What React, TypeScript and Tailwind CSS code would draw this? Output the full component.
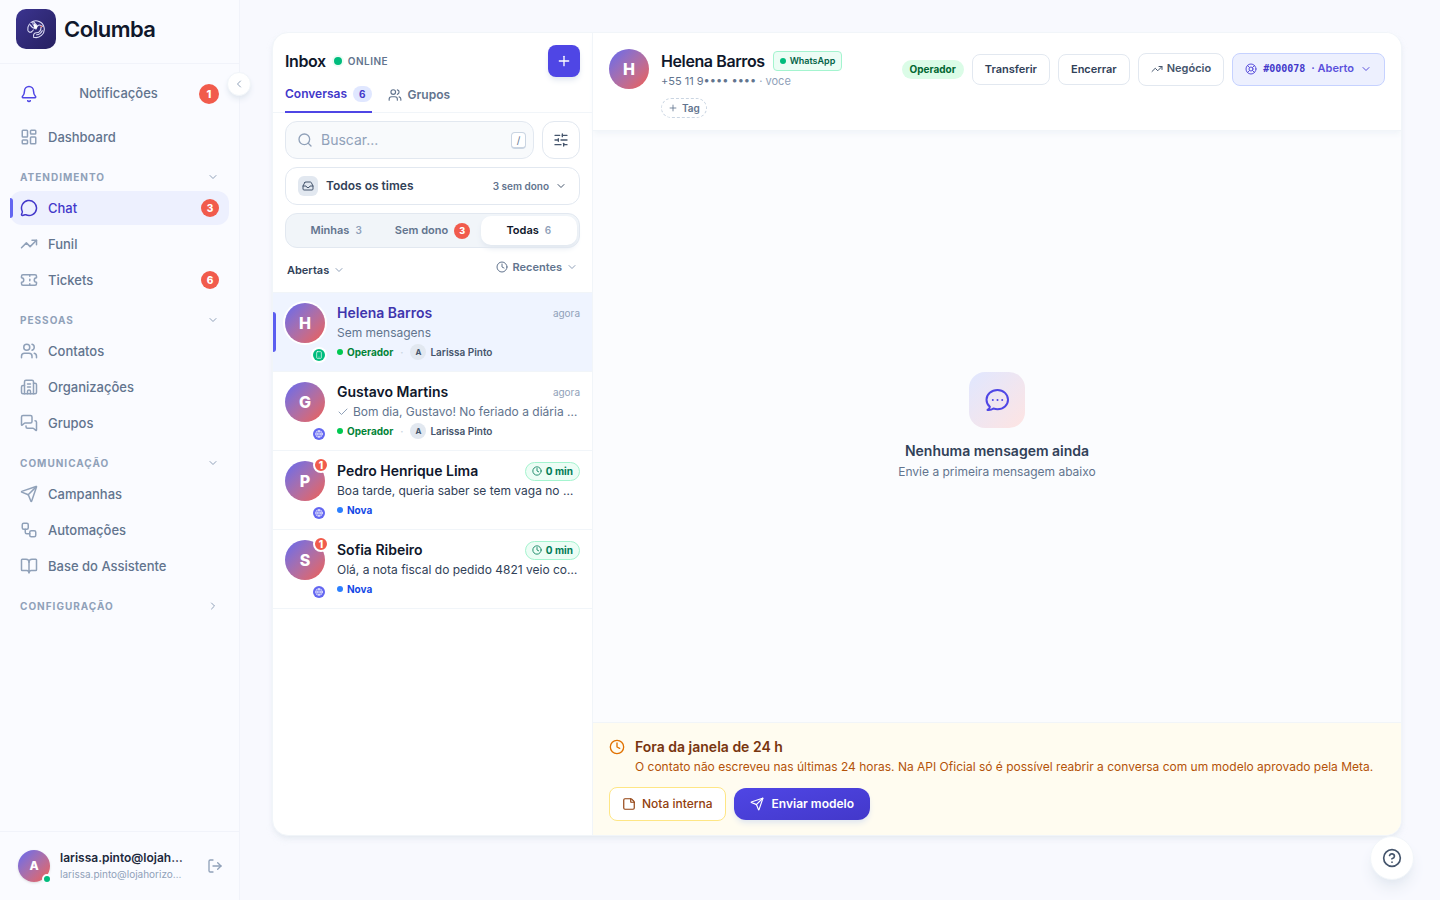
import type { ReactNode } from "react";
import {
  BookOpen,
  Building2,
  Check,
  ChevronDown,
  ChevronLeft,
  ChevronRight,
  CircleQuestionMark,
  Clock,
  Globe,
  Inbox,
  LayoutDashboard,
  LifeBuoy,
  LogOut,
  MessageCircle,
  MessagesSquare,
  Plus,
  Search,
  Send,
  SlidersHorizontal,
  Smartphone,
  StickyNote,
  Ticket,
  TrendingUp,
  Users,
  Workflow,
  Bell,
  type LucideIcon,
} from "lucide-react";

type NavItem = { label: string; icon: LucideIcon; badge?: number; active?: boolean };
type NavGroup = { title: string; open: boolean; items: NavItem[] };

const NAV: NavGroup[] = [
  {
    title: "Atendimento",
    open: true,
    items: [
      { label: "Chat", icon: MessageCircle, badge: 3, active: true },
      { label: "Funil", icon: TrendingUp },
      { label: "Tickets", icon: Ticket, badge: 6 },
    ],
  },
  {
    title: "Pessoas",
    open: true,
    items: [
      { label: "Contatos", icon: Users },
      { label: "Organizações", icon: Building2 },
      { label: "Grupos", icon: MessagesSquare },
    ],
  },
  {
    title: "Comunicação",
    open: true,
    items: [
      { label: "Campanhas", icon: Send },
      { label: "Automações", icon: Workflow },
      { label: "Base do Assistente", icon: BookOpen },
    ],
  },
  { title: "Configuração", open: false, items: [] },
];

type Conversation = {
  name: string;
  preview: string;
  channel: "phone" | "web";
  time?: string;
  wait?: string;
  owner?: string;
  unread?: number;
  sent?: boolean;
  active?: boolean;
};

const CONVERSATIONS: Conversation[] = [
  { name: "Helena Barros", preview: "Sem mensagens", channel: "phone", time: "agora", owner: "Larissa Pinto", active: true },
  { name: "Gustavo Martins", preview: "Bom dia, Gustavo! No feriado a diária muda", channel: "web", time: "agora", owner: "Larissa Pinto", sent: true },
  { name: "Pedro Henrique Lima", preview: "Boa tarde, queria saber se tem vaga no mesmo dia", channel: "web", wait: "0 min", unread: 1 },
  { name: "Sofia Ribeiro", preview: "Olá, a nota fiscal do pedido 4821 veio com erro", channel: "web", wait: "0 min", unread: 1 },
];

function Logo() {
  return (
    <span className="flex size-10 items-center justify-center rounded-[10px] bg-linear-to-br from-[#3b3490] to-[#262060]">
      <svg viewBox="0 0 24 24" className="size-5" fill="none" stroke="#dcdcf5" strokeWidth="1.3" strokeLinecap="round" strokeLinejoin="round" aria-hidden>
        <path d="M6 4.200A10 10 0 1 1 9 21.800" />
        <path d="M4.200 6A10 10 0 0 0 2.200 13.500c.5 2.500 3.200 3 5 1.500l1.600-1.800" />
        <path d="M8.500 3c-.8 2.800.2 4.800 2.300 6.200" />
        <path d="M5 7c1.600 3 3.800 4.400 7 5" />
        <path d="M9.500 3.800 13.800 8.500c1.200-1.300 3.200-1.500 4.600-.5l1.300.8-1.700 1c.2 4.200-2.300 6.700-5.600 6.700-2.200 0-3.400 1.500-3.400 4.300" />
        <path d="M9.800 5 14 9l-1.500 3.200-3.200-2z" fill="#fff" stroke="none" />
        <path d="M19.500 14c-1.300 2.800-3.500 4.600-6.800 5" />
        <circle cx="18.400" cy="9" r="1" fill="#f2604f" stroke="none" />
      </svg>
    </span>
  );
}

function Avatar({ letter, className }: { letter: string; className: string }) {
  return (
    <span className={`flex shrink-0 items-center justify-center rounded-full bg-linear-135 from-[#6366f1] to-[#f05a4c] font-extrabold text-white ${className}`}>
      {letter}
    </span>
  );
}

function CountBadge({ children, className }: { children: ReactNode; className: string }) {
  return (
    <span className={`flex shrink-0 items-center justify-center rounded-full bg-[#f15b4c] font-extrabold text-white ${className}`}>
      {children}
    </span>
  );
}

function NavLink({ label, icon: Icon, badge, active }: NavItem) {
  return (
    <a
      href="#"
      className={`relative flex h-[34px] items-center gap-2.5 rounded-xl px-2.5 text-[13px] leading-5 font-medium ${
        active ? "bg-[#edf0fe] text-[#4338ca]" : "text-slate-500"
      }`}
    >
      {active && <span className="absolute top-[7px] left-0 h-5 w-[3px] rounded-r-full bg-[#6366f1]" />}
      <Icon className={`size-[18px] ${active ? "" : "text-slate-400"}`} />
      <span className="flex-1">{label}</span>
      {badge && <CountBadge className="size-[18px] text-[10px]">{badge}</CountBadge>}
    </a>
  );
}

function Sidebar() {
  return (
    <aside className="relative flex w-60 shrink-0 flex-col border-r border-[#f1f3fa] bg-[#fafbff]">
      <div className="flex h-16 shrink-0 items-center gap-2 border-b border-[#f1f3fa] px-4 pb-1.5">
        <Logo />
        <span className="text-[22px] leading-8 font-semibold tracking-tight text-slate-900">Columba</span>
      </div>
      <button
        type="button"
        aria-label="Recolher menu"
        className="absolute top-[72px] -right-3 z-10 flex size-6 items-center justify-center rounded-full border border-slate-100 bg-white text-slate-400 shadow-md shadow-slate-200"
      >
        <ChevronLeft className="size-3" />
      </button>

      <nav className="flex flex-1 flex-col overflow-y-auto px-2.5 pt-2">
        <button type="button" className="flex h-11 shrink-0 items-center justify-between px-2.5 text-[13px] font-medium text-slate-500">
          <Bell className="size-[18px] text-[#4f46e5]" />
          <span>Notificações</span>
          <CountBadge className="size-5 text-[11px]">1</CountBadge>
        </button>
        <div className="mt-1">
          <NavLink label="Dashboard" icon={LayoutDashboard} />
        </div>
        {NAV.map((group) => (
          <div key={group.title} className="mt-[9px]">
            <button
              type="button"
              aria-expanded={group.open}
              className="flex h-7 w-full items-center justify-between px-2.5 text-[10px] font-bold tracking-widest text-slate-400 uppercase"
            >
              {group.title}
              {group.open ? <ChevronDown className="size-3" /> : <ChevronRight className="size-3" />}
            </button>
            <div className="flex flex-col gap-0.5">
              {group.items.map((item) => (
                <NavLink key={item.label} {...item} />
              ))}
            </div>
          </div>
        ))}
      </nav>

      <div className="flex h-[69px] shrink-0 items-center gap-2.5 border-t border-[#f1f3fa] pr-4 pl-[18px]">
        <span className="relative">
          <Avatar letter="A" className="size-8 text-xs shadow-sm" />
          <span className="absolute -right-0.5 -bottom-0.5 size-2.5 rounded-full border-2 border-[#fafbff] bg-emerald-500" />
        </span>
        <div className="w-[125px]">
          <p className="truncate text-xs leading-4 font-semibold text-slate-800">larissa.pinto@lojahorizonte.com</p>
          <p className="truncate text-[10px] leading-4 text-slate-400">larissa.pinto@lojahorizonte.com.br</p>
        </div>
        <button type="button" aria-label="Sair" className="ml-auto text-slate-400">
          <LogOut className="size-4" />
        </button>
      </div>
    </aside>
  );
}

function ConversationRow({ c }: { c: Conversation }) {
  return (
    <li>
      <a
        href="#"
        className={`relative flex h-[79px] gap-3 border-b border-slate-100 px-3 pt-2.5 ${c.active ? "bg-[#eff4ff]" : ""}`}
      >
        {c.active && <span className="absolute top-[19px] left-0 h-10 w-[3px] rounded-r-full bg-[#5b5ef0]" />}
        <span className="relative flex h-[60px] w-10 shrink-0">
          <Avatar letter={c.name[0]} className={`size-10 text-base ${c.active ? "ring-2 ring-white" : ""}`} />
          {c.unread && (
            <CountBadge className="absolute -top-1 -right-1 size-4 border-2 border-white text-[10px]">{c.unread}</CountBadge>
          )}
          <span
            className={`absolute right-0 bottom-0.5 flex size-3 items-center justify-center rounded-full text-white ring-2 ring-white ${
              c.channel === "phone" ? "bg-emerald-500" : "bg-[#6366f1]"
            }`}
          >
            {c.channel === "phone" ? <Smartphone className="size-2" /> : <Globe className="size-2" />}
          </span>
        </span>
        <span className="min-w-0 flex-1">
          <span className="flex h-5 items-center justify-between">
            <span className={`text-sm font-semibold ${c.active ? "text-[#3f35ad]" : "text-slate-900"}`}>{c.name}</span>
            {c.time && <span className="text-[10px] leading-4 text-slate-400">{c.time}</span>}
            {c.wait && (
              <span className="flex h-[19px] items-center gap-1 rounded-full border border-emerald-200 bg-emerald-50 px-1.5 text-[10px] leading-4 font-bold text-emerald-700">
                <Clock className="size-2.5" />
                {c.wait}
              </span>
            )}
          </span>
          <span className={`flex h-5 items-center gap-1 text-xs ${c.unread ? "text-slate-700" : "text-slate-500"}`}>
            {c.sent && <Check className="size-3 shrink-0 text-slate-400" />}
            <span className="truncate">{c.preview}</span>
          </span>
          <span className="flex h-[18px] items-center text-[10px] leading-4 font-semibold">
            {c.owner ? (
              <>
                <span className="size-1.5 rounded-full bg-green-500" />
                <span className="ml-1 font-bold text-green-700">Operador</span>
                <span className="mx-[7px] text-slate-300">·</span>
                <span className="flex size-4 items-center justify-center rounded-full bg-slate-200 text-[8px] font-bold text-slate-600">A</span>
                <span className="ml-1 text-slate-600">{c.owner}</span>
              </>
            ) : (
              <>
                <span className="size-1.5 rounded-full bg-blue-500" />
                <span className="ml-1 font-bold text-blue-700">Nova</span>
              </>
            )}
          </span>
        </span>
      </a>
    </li>
  );
}

function InboxPanel() {
  return (
    <section className="flex w-80 shrink-0 flex-col border-r border-slate-100">
      <div className="flex items-center px-3 pt-3">
        <h1 className="text-base font-semibold tracking-tight text-slate-900">Inbox</h1>
        <span className="ml-2 size-2 rounded-full bg-emerald-500 ring-2 ring-emerald-50" />
        <span className="ml-1.5 text-[10px] font-semibold tracking-wider text-slate-500">ONLINE</span>
        <button
          type="button"
          aria-label="Nova conversa"
          className="ml-auto flex size-8 items-center justify-center rounded-lg bg-[#4f46e5] text-white shadow-md shadow-slate-200"
        >
          <Plus className="size-4" />
        </button>
      </div>

      <div className="flex h-9 gap-4 border-b border-slate-100 px-3 text-xs font-semibold">
        <button type="button" className="-mb-px flex items-center gap-1.5 border-b-2 border-[#4f46e5] text-[#4338ca]">
          Conversas
          <span className="rounded-full bg-indigo-100 px-1.5 text-[10px] leading-4 font-bold">6</span>
        </button>
        <button type="button" className="flex items-center gap-1.5 text-slate-500">
          <Users className="size-3.5" />
          Grupos
        </button>
      </div>

      <div className="flex flex-col gap-2 px-3 pt-2">
        <div className="flex gap-2">
          <label className="flex h-[38px] min-w-0 flex-1 items-center gap-2 rounded-xl border border-slate-200 bg-slate-50 pr-[7px] pl-[11px]">
            <Search className="size-4 shrink-0 text-slate-400" />
            <input
              type="search"
              aria-label="Buscar conversas"
              placeholder="Buscar..."
              className="min-w-0 flex-1 bg-transparent text-sm outline-none placeholder:text-slate-400"
            />
            <kbd className="flex h-[17px] w-[15px] items-center justify-center rounded-sm border border-b-2 border-slate-300 bg-white font-[Inter,sans-serif] text-[10px] leading-3 text-slate-500">
              /
            </kbd>
          </label>
          <button type="button" aria-label="Filtros" className="flex size-[38px] items-center justify-center rounded-xl border border-slate-200 text-slate-600">
            <SlidersHorizontal className="size-4" />
          </button>
        </div>

        <button type="button" className="flex h-[38px] items-center rounded-xl border border-slate-200 px-3 text-slate-700">
          <span className="flex size-5 items-center justify-center rounded-md bg-slate-200 text-slate-600">
            <Inbox className="size-3" />
          </span>
          <span className="ml-2 text-xs font-semibold">Todos os times</span>
          <span className="ml-auto text-[10px] font-semibold text-slate-500">3 sem dono</span>
          <ChevronDown className="ml-1.5 size-3 text-slate-600" />
        </button>

        <div className="grid h-[35px] grid-cols-3 rounded-xl border border-slate-200 bg-slate-100 p-0.5 text-[11px] font-semibold text-slate-500">
          <button type="button" className="flex items-center justify-center gap-1.5">
            Minhas <span className="text-[10px] text-slate-400">3</span>
          </button>
          <button type="button" className="flex items-center justify-center gap-1.5">
            Sem dono <CountBadge className="size-4 text-[9px]">3</CountBadge>
          </button>
          <button type="button" className="flex items-center justify-center gap-1.5 rounded-[10px] bg-white text-slate-900 shadow-md shadow-slate-200">
            Todas <span className="text-[10px] text-slate-400">6</span>
          </button>
        </div>
      </div>

      <div className="flex h-11 items-center justify-between px-3.5 text-[11px] font-semibold">
        <button type="button" className="flex items-center gap-1 text-slate-700">
          Abertas
          <ChevronDown className="size-3 text-slate-400" />
        </button>
        <button type="button" className="mb-1.5 flex items-center gap-1 text-slate-500">
          <Clock className="size-3" />
          Recentes
          <ChevronDown className="size-3 text-slate-400" />
        </button>
      </div>

      <ul className="flex-1 overflow-y-auto border-t border-slate-100">
        {CONVERSATIONS.map((c) => (
          <ConversationRow key={c.name} c={c} />
        ))}
      </ul>
    </section>
  );
}

function ChatHeader() {
  return (
    <header className="relative flex items-start gap-3 border-b border-slate-100 bg-white px-4 pt-4 pb-3 shadow-md shadow-slate-100">
      <Avatar letter="H" className="size-10 text-base" />
      <div className="min-w-0 flex-1">
        <div className="flex h-6 items-center gap-2">
          <h2 className="text-base font-semibold tracking-tight text-slate-900">Helena Barros</h2>
          <span className="flex h-5 items-center gap-1 rounded-sm border border-emerald-200 bg-emerald-50 px-1.5 text-[9px] font-semibold text-emerald-800">
            <span className="size-1.5 rounded-full bg-emerald-500" />
            WhatsApp
          </span>
        </div>
        <p className="text-[11px] leading-4 text-slate-500">
          +55 11 9•••• •••• <span className="text-slate-400">· voce</span>
        </p>
        <button type="button" className="mt-[9px] flex h-5 items-center gap-1 rounded-full border border-dashed border-slate-300 px-1.5 text-[10px] font-semibold text-slate-500">
          <Plus className="size-2.5" />
          Tag
        </button>
      </div>

      <div className="mt-1 flex items-center gap-2 text-[11px] font-semibold text-slate-700">
        <span className="rounded-full bg-green-100 px-2 text-[10px] leading-[19px] font-bold text-green-800">Operador</span>
        <button type="button" className="h-[31px] rounded-lg border border-slate-200 px-3">Transferir</button>
        <button type="button" className="h-[31px] rounded-lg border border-slate-200 px-3">Encerrar</button>
        <button type="button" className="flex h-[33px] items-center gap-1 rounded-lg border border-slate-200 px-3 pb-0.5 text-slate-600">
          <TrendingUp className="size-3" />
          Negócio
        </button>
        <button type="button" className="flex h-[33px] items-center rounded-lg border border-indigo-200 bg-[#edf0fe] px-3 pb-0.5 text-[#5b50dc]">
          <LifeBuoy className="size-3" />
          <span className="ml-1.5 font-['DejaVu_Sans_Mono',monospace] text-[10px] font-bold text-[#4338ca]">#000078</span>
          <span className="ml-1.5">· Aberto</span>
          <ChevronDown className="ml-1.5 size-3" />
        </button>
      </div>
    </header>
  );
}

function EmptyMessages() {
  return (
    <div className="flex flex-1 flex-col items-center justify-center bg-[#fbfcfe]">
      <div className="flex size-14 items-center justify-center rounded-2xl bg-linear-to-br from-indigo-100 to-[#fee4e2]">
        <svg viewBox="0 0 28 28" className="size-7" fill="none" stroke="#4f46e5" strokeWidth="2" strokeLinecap="round" strokeLinejoin="round" aria-hidden>
          <path d="M14.500 4C8.500 4 3.500 8.300 3.500 13.700c0 2.800 1.300 5.300 3.400 7-.1 1.300-.9 2.500-2.400 3.300 2.300.3 4.400-.3 5.900-1.500 1.300.4 2.700.7 4.100.7C20.500 23.200 25 19 25 13.700S20.500 4 14.500 4Z" />
          <path d="M9.800 14h.01M14.500 14h.01M19.200 14h.01" />
        </svg>
      </div>
      <h3 className="mt-3 text-sm leading-[22px] font-semibold text-slate-700">Nenhuma mensagem ainda</h3>
      <p className="text-xs leading-5 text-slate-500">Envie a primeira mensagem abaixo</p>
    </div>
  );
}

function WindowNotice() {
  return (
    <footer className="border-t border-slate-100 bg-[#fffcf0] px-4 pt-3.5 pb-3.5">
      <div className="flex gap-2.5">
        <Clock className="mt-0.5 size-4 shrink-0 text-amber-600" />
        <div>
          <p className="text-sm leading-5 font-semibold text-[#78350f]">Fora da janela de 24 h</p>
          <p className="text-xs leading-5 text-[#b45309]">
            O contato não escreveu nas últimas 24 horas. Na API Oficial só é possível reabrir a conversa com um modelo aprovado pela Meta.
          </p>
        </div>
      </div>
      <div className="mt-2.5 flex items-center gap-2 text-xs font-semibold">
        <button type="button" className="flex h-[34px] items-center gap-1.5 rounded-lg border border-amber-200 bg-white px-3 font-medium text-[#92400e]">
          <StickyNote className="size-3.5" />
          Nota interna
        </button>
        <button type="button" className="flex h-8 items-center gap-2 rounded-xl bg-linear-to-br from-[#4f46e5] to-[#4338ca] px-4 text-white shadow-md shadow-slate-200">
          <Send className="size-3.5" />
          Enviar modelo
        </button>
      </div>
    </footer>
  );
}

export default function App() {
  return (
    <div className="flex h-screen bg-[#f8f9fe] font-[Inter,sans-serif]">
      <Sidebar />
      <main className="flex min-w-0 flex-1 pt-8 pr-[38px] pb-16 pl-8">
        <div className="flex min-w-0 flex-1 overflow-hidden rounded-2xl border border-slate-100 bg-white shadow-md shadow-slate-200/70">
          <InboxPanel />
          <section className="flex min-w-0 flex-1 flex-col">
            <ChatHeader />
            <EmptyMessages />
            <WindowNotice />
          </section>
        </div>
      </main>
      <button
        type="button"
        aria-label="Ajuda"
        className="fixed right-[26px] bottom-5 flex size-11 items-center justify-center rounded-full border border-slate-100 bg-white text-slate-600 shadow-lg shadow-slate-200"
      >
        <CircleQuestionMark className="size-5" />
      </button>
    </div>
  );
}
